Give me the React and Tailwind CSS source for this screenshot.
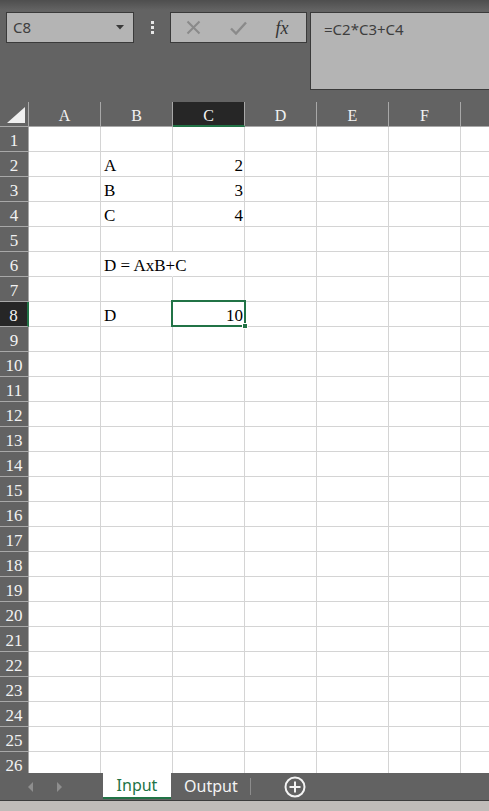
import React from "react";

const cols = ["A", "B", "C", "D", "E", "F", "G"];
const rows = Array.from({ length: 26 }, (_, i) => i + 1);

const data = {
  2: { B: "A", C: "2" },
  3: { B: "B", C: "3" },
  4: { B: "C", C: "4" },
  6: { B: "D = AxB+C" },
  8: { B: "D", C: "10" },
};

const serif = { fontFamily: '"Liberation Serif", "Times New Roman", serif' };
const sans = { fontFamily: '"Noto Sans", "Liberation Sans", sans-serif' };

function Toolbar() {
  return (
    <div className="h-[102px] shrink-0 bg-gradient-to-b from-[#4e4e4e] via-[#636363] via-[10%] to-[#636363]">
      <div className="flex items-start pt-[12px] pl-[6px]" style={sans}>
        <div className="flex h-[31px] w-[128px] shrink-0 items-center justify-between border border-[#3a3a3a] bg-[#b4b4b4] pl-[6px] pr-[9px]">
          <span className="text-[15px] leading-none text-[#3e3e3e]">C8</span>
          <svg width="8" height="5" viewBox="0 0 8 5">
            <polygon points="0,0 8,0 4,4.5" fill="#3a3a3a" />
          </svg>
        </div>
        <div className="flex h-[31px] w-[36px] shrink-0 flex-col items-center justify-center gap-[2px] pl-[1px]">
          <span className="h-[3px] w-[3px] bg-[#e6e6e6]" />
          <span className="h-[3px] w-[3px] bg-[#e6e6e6]" />
          <span className="h-[3px] w-[3px] bg-[#e6e6e6]" />
        </div>
        <div className="flex h-[31px] w-[137px] shrink-0 items-center border border-[#3a3a3a] bg-[#b4b4b4]">
          <div className="flex w-[44px] justify-center pl-[1px]">
            <svg width="15" height="15" viewBox="0 0 15 15">
              <path d="M1.5 1.5 L13.5 13.5 M13.5 1.5 L1.5 13.5" stroke="#8a8a8a" strokeWidth="2" />
            </svg>
          </div>
          <div className="flex w-[46px] justify-center pl-[1px]">
            <svg width="17" height="14" viewBox="0 0 17 14">
              <path d="M1 7.5 L6 12.5 L16 1.5" stroke="#8a8a8a" strokeWidth="2.4" fill="none" />
            </svg>
          </div>
          <div className="flex w-[42px] justify-center">
            <span className="text-[18px] italic leading-none text-[#333]" style={serif}>
              fx
            </span>
          </div>
        </div>
        <div className="ml-[3px] h-[78px] w-[190px] shrink-0 border border-[#3a3a3a] bg-[#b4b4b4] pl-[13px] pt-[4px]">
          <span className="text-[15px] text-[#3e3e3e]">=C2*C3+C4</span>
        </div>
      </div>
    </div>
  );
}

function Grid() {
  return (
    <div className="h-[671px] shrink-0 overflow-hidden bg-white" style={serif}>
      <div className="grid w-[533px] grid-cols-[29px_repeat(7,72px)] auto-rows-[25px]">
        <div className="flex items-end justify-end border-r border-b border-[#a8a8a8] bg-[#636363] pr-[3px] pb-[3px]">
          <svg width="18" height="16" viewBox="0 0 18 16">
            <polygon points="18,0 18,16 0,16" fill="#efefef" />
          </svg>
        </div>
        {cols.map((c) =>
          c === "C" ? (
            <div
              key={c}
              className="flex justify-center border-r border-b-2 border-r-[#a8a8a8] border-b-[#217346] bg-[#262626] pt-[4px] text-[16px] leading-[20px] text-[#f2f2f2]"
            >
              {c}
            </div>
          ) : (
            <div
              key={c}
              className="flex justify-center border-r border-b border-[#a8a8a8] bg-[#636363] pt-[4px] text-[16px] leading-[20px] text-[#f2f2f2]"
            >
              {c}
            </div>
          )
        )}
        {rows.map((r) => (
          <React.Fragment key={r}>
            {r === 8 ? (
              <div className="flex justify-center border-r-2 border-b border-r-[#217346] border-b-[#a8a8a8] bg-[#262626] pt-[4px] text-[17px] leading-[20px] text-[#f2f2f2]">
                {r}
              </div>
            ) : (
              <div className="flex justify-center border-r border-b border-[#a8a8a8] bg-[#636363] pt-[4px] text-[17px] leading-[20px] text-[#f2f2f2]">
                {r}
              </div>
            )}
            {cols.map((c) => {
              const v = data[r] && data[r][c];
              const isNum = v && /^\d+$/.test(v);
              const overflow = r === 6 && c === "B";
              return (
                <div
                  key={c}
                  className={
                    overflow
                      ? "relative border-r border-b border-r-white border-b-[#d4d4d4]"
                      : "relative border-r border-b border-[#d4d4d4]"
                  }
                >
                  {v && (
                    <div
                      className={
                        isNum
                          ? "flex justify-end pr-[1px] pt-[4px] text-[17px] leading-[20px] text-black"
                          : "relative z-10 whitespace-nowrap pl-[3px] pt-[4px] text-[17px] leading-[20px] text-black"
                      }
                    >
                      {v}
                    </div>
                  )}
                  {r === 8 && c === "C" && (
                    <div className="absolute left-[-2px] top-[-2px] z-20 h-[27px] w-[75px] border-2 border-[#217346]">
                      <div className="absolute right-[-4px] bottom-[-4px] h-[6px] w-[6px] border border-white bg-[#217346]" />
                    </div>
                  )}
                </div>
              );
            })}
          </React.Fragment>
        ))}
      </div>
    </div>
  );
}

function Tabs() {
  return (
    <div className="flex h-[27px] shrink-0 items-stretch bg-[#626262]" style={sans}>
      <div className="flex w-[103px] shrink-0 items-center gap-[24px] pl-[28px] pt-[1px]">
        <svg width="5" height="10" viewBox="0 0 5 10">
          <polygon points="5,0 5,10 0,5" fill="#8e8e8e" />
        </svg>
        <svg width="5" height="10" viewBox="0 0 5 10">
          <polygon points="0,0 0,10 5,5" fill="#8e8e8e" />
        </svg>
      </div>
      <div className="flex h-[26px] w-[68px] shrink-0 items-center justify-center border-b-2 border-[#217346] bg-white">
        <span className="text-[16px] leading-none text-[#217346]">Input</span>
      </div>
      <div className="flex shrink-0 items-center pl-[13px] pr-[12px] pb-[1px]">
        <span className="text-[16px] leading-none text-[#f4f4f4]">Output</span>
      </div>
      <div className="my-[5px] w-[1px] shrink-0 bg-[#8c8c8c]" />
      <div className="flex shrink-0 items-center pl-[33px] pt-[1px]">
        <svg width="22" height="22" viewBox="0 0 22 22">
          <circle cx="11" cy="11" r="9.5" stroke="#f4f4f4" strokeWidth="2" fill="none" />
          <path d="M11 5.5 V16.5 M5.5 11 H16.5" stroke="#f4f4f4" strokeWidth="2" />
        </svg>
      </div>
    </div>
  );
}

export default function App() {
  return (
    <div className="flex h-[811px] w-[489px] flex-col overflow-hidden bg-[#636363]">
      <Toolbar />
      <Grid />
      <Tabs />
      <div className="h-[1px] shrink-0 bg-[#3c3c3c]" />
      <div className="h-[10px] shrink-0 bg-[#c0bcb9]" />
    </div>
  );
}
